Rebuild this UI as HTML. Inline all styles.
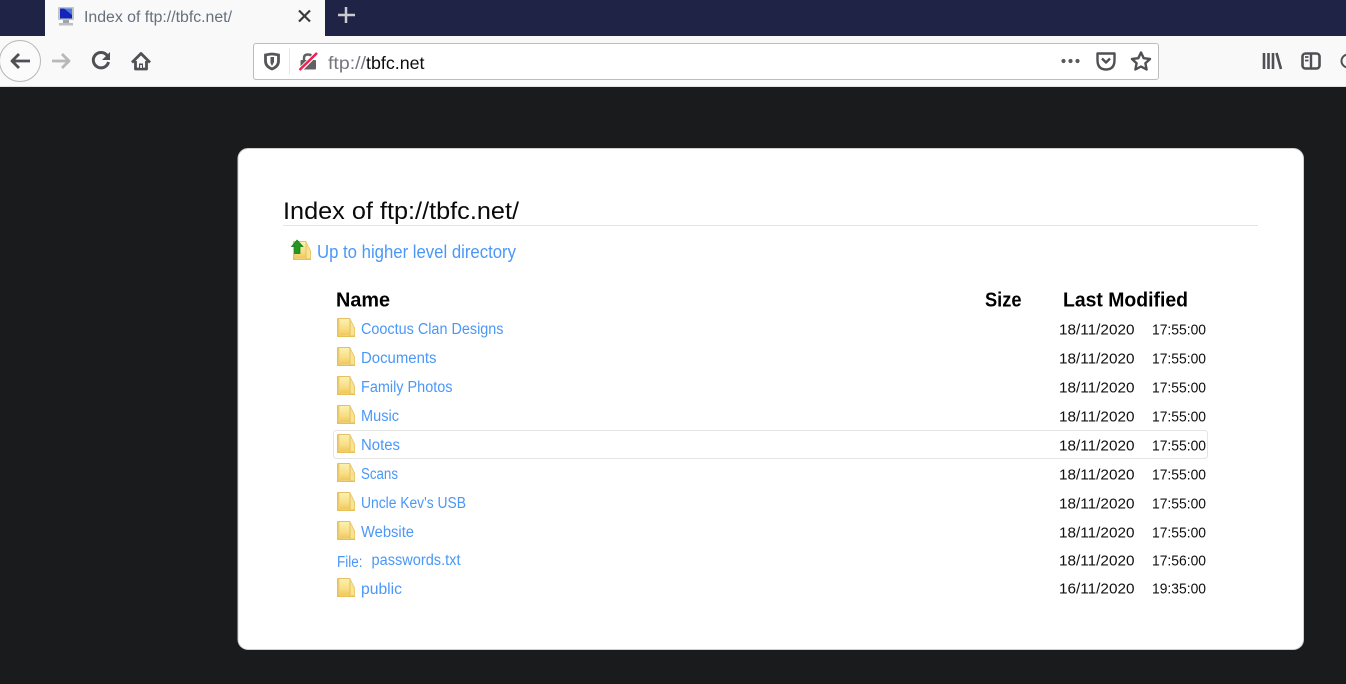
<!DOCTYPE html>
<html lang="en">
<head>
<meta charset="utf-8">
<title>Index of ftp://tbfc.net/</title>
<style>
html,body{margin:0;padding:0;width:1346px;height:684px;overflow:hidden;background:#1a1b1d}
svg{display:block}
text{font-family:"Liberation Sans",Arial,sans-serif}
.l{fill:#4a97f8;font-size:15.5px}
.d{fill:#111;font-size:15px}
.h{fill:#000;font-size:20px;font-weight:bold}
.ic{fill:none;stroke:#505054;stroke-linecap:butt;stroke-linejoin:round}
</style>
</head>
<body>
<svg width="1346" height="684" viewBox="0 0 1346 684" xmlns="http://www.w3.org/2000/svg">
<defs>
<linearGradient id="fg" x1="0" y1="0" x2="0" y2="1"><stop offset="0" stop-color="#fdf0ae"/><stop offset=".6" stop-color="#f8de86"/><stop offset="1" stop-color="#f0c85c"/></linearGradient>
<linearGradient id="fe" x1="0" y1="0" x2="1" y2="0"><stop offset="0" stop-color="#e3bf5c"/><stop offset=".25" stop-color="#f8e08c"/><stop offset="1" stop-color="#fbe89a"/></linearGradient>
<g id="folder">
<path d="M0 2 Q0 1 1 1 H13 L18 11 V19 Q18 20 17 20 H1 Q0 20 0 19Z" fill="#e3c064"/>
<path d="M0.500 2 H12.500 V19.500 H0.500Z" fill="url(#fe)"/>
<path d="M2.500 2 H12.500 V18 H2.500Z" fill="url(#fg)"/>
<path d="M13.500 3.500 L17.300 11.500 V19 H13.500Z" fill="#f9e390"/>
<rect x="0" y="18.500" width="18" height="1.500" fill="#e6bf58"/>
</g>
</defs>

<rect width="1346" height="36" fill="#1f2345"/>
<rect x="45" width="280" height="36" fill="#f9f9fa"/>
<rect x="58" y="7" width="16" height="13" rx="1" fill="#c2c4c8"/>
<rect x="60" y="8.500" width="12" height="10" fill="#1426b8"/>
<path d="M64 8.500 H72 V15Z" fill="#4a78e0"/>
<rect x="63" y="20" width="6" height="3" fill="#a0a2a6"/>
<rect x="59" y="23" width="14" height="2.500" fill="#bcbec2"/>
<text x="84" y="22" font-size="15.500" fill="#66707c" textLength="148" lengthAdjust="spacingAndGlyphs">Index of ftp://tbfc.net/</text>
<path d="M299 10.500 L310 21.500 M310 10.500 L299 21.500" stroke="#3a3a3e" stroke-width="2.200" fill="none"/>
<path d="M346 7 V23 M338 15 H355" stroke="#c9cad2" stroke-width="2.500" fill="none"/>

<rect y="36" width="1346" height="50" fill="#f9f9fa"/>
<rect y="86" width="1346" height="1" fill="#e2e2e4"/>

<circle cx="20" cy="61" r="20.500" fill="#fbfbfb" stroke="#b8b8ba"/>
<path class="ic" d="M30 61 H12 M19 54 L12 61 L19 68" style="stroke-width:2.800"/>
<path class="ic" d="M52 61 H69 M62 54 L69 61 L62 68" style="stroke:#b8b8ba;stroke-width:2.800"/>
<path class="ic" d="M107.500 56 A7.700 7.700 0 1 0 108.500 62" style="stroke-width:3"/>
<path d="M110 52 V60 H102Z" fill="#505054"/>
<path class="ic" d="M132 62.500 L141 53.500 L150 62.500" style="stroke-width:2.800"/>
<path class="ic" d="M135.500 61 V69 H146.500 V61" style="stroke-width:2.800"/>
<path d="M139 69 V63.500 H143 V69Z" fill="#505054"/>
<rect x="140.200" y="65" width="1.700" height="3" fill="#f9f9fa"/>

<rect x="253.500" y="43.500" width="905" height="36" rx="2.500" fill="#fff" stroke="#bdbdc0"/>
<path d="M265.500 55 Q270 54 272 54 Q274 54 278.500 55 V61 Q278.500 66.500 272 69 Q265.500 66.500 265.500 61Z" fill="#fff" stroke="#55555a" stroke-width="2.800"/>
<path d="M270.500 57 H274 V62 L272 66 L270.500 63Z" fill="#55555a"/>
<rect x="289" y="48" width="1" height="26" fill="#e6e6e8"/>
<path d="M304 60.500 V58 Q304 54.500 308 54.500 Q312 54.500 312 58 V60.500" fill="none" stroke="#606064" stroke-width="2.400"/>
<rect x="300.500" y="60" width="15.500" height="9.500" rx="1" fill="#606064"/>
<path d="M299 71 L317 53" stroke="#fff" stroke-width="4.500" fill="none"/>
<path d="M299.500 70 L317 53" stroke="#ee1f4f" stroke-width="2.500" fill="none"/>
<text x="328" y="69" font-size="17.500" fill="#76767e" textLength="38" lengthAdjust="spacingAndGlyphs">ftp://</text>
<text x="366" y="69" font-size="17.500" fill="#0c0c0d" textLength="58.500" lengthAdjust="spacingAndGlyphs">tbfc.net</text>

<circle cx="1063.500" cy="61" r="2.100" fill="#5a5a5e"/><circle cx="1070.500" cy="61" r="2.100" fill="#5a5a5e"/><circle cx="1077.500" cy="61" r="2.100" fill="#5a5a5e"/>
<path class="ic" d="M1097.500 53.500 H1114.500 V60 Q1114.500 69.500 1106 69.500 Q1097.500 69.500 1097.500 60Z M1102 58.500 L1106 62.500 L1110 58.500" style="stroke-width:2.400"/>
<path class="ic" d="M1141 52.500 L1143.700 58.200 L1150 59 L1145.400 63.300 L1146.600 69.500 L1141 66.500 L1135.400 69.500 L1136.600 63.300 L1132 59 L1138.300 58.200Z" style="stroke-width:2.400"/>

<path class="ic" d="M1264 53 V69 M1268.500 53 V69 M1273 53 V69 M1276.500 53 L1281 69" style="stroke-width:2.600"/>
<rect x="1302.500" y="53.500" width="17" height="15" rx="3" class="ic" style="stroke-width:2.600"/>
<path class="ic" d="M1311 53 V69" style="stroke-width:2.400"/>
<path d="M1305 57 H1308.500 M1305 60.500 H1308.500" stroke="#505054" stroke-width="1.700"/>
<path d="M1348 54.500 A6.500 6.500 0 0 0 1348 67.500" class="ic" style="stroke-width:2"/>

<rect x="238" y="148.500" width="1065.500" height="501" rx="10" fill="#fff" stroke="#d0d0d0"/>

<text x="283" y="219" font-size="24.500" fill="#0a0a0a" textLength="236" lengthAdjust="spacingAndGlyphs">Index of ftp://tbfc.net/</text>
<rect x="283" y="225" width="975" height="1" fill="#e3e3e3"/>

<use href="#folder" x="293" y="240"/>
<path d="M297 240 L303 246.500 H300 V253.500 H294.500 V246.500 H291.500Z" fill="#1e9a22" stroke="#137a18" stroke-width=".7"/>
<text x="317" y="258" font-size="18" fill="#4a97f8" textLength="199" lengthAdjust="spacingAndGlyphs">Up to higher level directory</text>

<text class="h" x="336" y="306.500" textLength="54" lengthAdjust="spacingAndGlyphs">Name</text>
<text class="h" x="985" y="306.500" textLength="36.500" lengthAdjust="spacingAndGlyphs">Size</text>
<text class="h" x="1063" y="306.500" textLength="125" lengthAdjust="spacingAndGlyphs">Last Modified</text>

<rect x="333.500" y="430.500" width="874" height="28" rx="3" fill="#fff" stroke="#e4e4e4"/>

<use href="#folder" x="337" y="317"/>
<text class="l" x="361" y="334" textLength="142.500" lengthAdjust="spacingAndGlyphs">Cooctus Clan Designs</text>
<text class="d" x="1059" y="334.500" textLength="75.500" lengthAdjust="spacingAndGlyphs">18/11/2020</text>
<text class="d" x="1152" y="334.500" textLength="54" lengthAdjust="spacingAndGlyphs">17:55:00</text>

<use href="#folder" x="337" y="346"/>
<text class="l" x="361" y="363" textLength="75.500" lengthAdjust="spacingAndGlyphs">Documents</text>
<text class="d" x="1059" y="363.500" textLength="75.500" lengthAdjust="spacingAndGlyphs">18/11/2020</text>
<text class="d" x="1152" y="363.500" textLength="54" lengthAdjust="spacingAndGlyphs">17:55:00</text>

<use href="#folder" x="337" y="375"/>
<text class="l" x="361" y="392" textLength="91.500" lengthAdjust="spacingAndGlyphs">Family Photos</text>
<text class="d" x="1059" y="392.500" textLength="75.500" lengthAdjust="spacingAndGlyphs">18/11/2020</text>
<text class="d" x="1152" y="392.500" textLength="54" lengthAdjust="spacingAndGlyphs">17:55:00</text>

<use href="#folder" x="337" y="404"/>
<text class="l" x="361" y="421" textLength="38" lengthAdjust="spacingAndGlyphs">Music</text>
<text class="d" x="1059" y="421.500" textLength="75.500" lengthAdjust="spacingAndGlyphs">18/11/2020</text>
<text class="d" x="1152" y="421.500" textLength="54" lengthAdjust="spacingAndGlyphs">17:55:00</text>

<use href="#folder" x="337" y="433"/>
<text class="l" x="361" y="450" textLength="39" lengthAdjust="spacingAndGlyphs">Notes</text>
<text class="d" x="1059" y="450.500" textLength="75.500" lengthAdjust="spacingAndGlyphs">18/11/2020</text>
<text class="d" x="1152" y="450.500" textLength="54" lengthAdjust="spacingAndGlyphs">17:55:00</text>

<use href="#folder" x="337" y="462"/>
<text class="l" x="361" y="479" textLength="37" lengthAdjust="spacingAndGlyphs">Scans</text>
<text class="d" x="1059" y="479.500" textLength="75.500" lengthAdjust="spacingAndGlyphs">18/11/2020</text>
<text class="d" x="1152" y="479.500" textLength="54" lengthAdjust="spacingAndGlyphs">17:55:00</text>

<use href="#folder" x="337" y="491"/>
<text class="l" x="361" y="508" textLength="105" lengthAdjust="spacingAndGlyphs">Uncle Kev's USB</text>
<text class="d" x="1059" y="508.500" textLength="75.500" lengthAdjust="spacingAndGlyphs">18/11/2020</text>
<text class="d" x="1152" y="508.500" textLength="54" lengthAdjust="spacingAndGlyphs">17:55:00</text>

<use href="#folder" x="337" y="520"/>
<text class="l" x="361" y="537" textLength="53" lengthAdjust="spacingAndGlyphs">Website</text>
<text class="d" x="1059" y="537.500" textLength="75.500" lengthAdjust="spacingAndGlyphs">18/11/2020</text>
<text class="d" x="1152" y="537.500" textLength="54" lengthAdjust="spacingAndGlyphs">17:55:00</text>

<text class="l" x="337" y="567" textLength="25.500" lengthAdjust="spacingAndGlyphs">File:</text>
<text class="l" x="371.500" y="565" textLength="89" lengthAdjust="spacingAndGlyphs">passwords.txt</text>
<text class="d" x="1059" y="565.500" textLength="75.500" lengthAdjust="spacingAndGlyphs">18/11/2020</text>
<text class="d" x="1152" y="565.500" textLength="54" lengthAdjust="spacingAndGlyphs">17:56:00</text>

<use href="#folder" x="337" y="577"/>
<text class="l" x="361" y="594" textLength="41" lengthAdjust="spacingAndGlyphs">public</text>
<text class="d" x="1059" y="593.500" textLength="75.500" lengthAdjust="spacingAndGlyphs">16/11/2020</text>
<text class="d" x="1152" y="593.500" textLength="54" lengthAdjust="spacingAndGlyphs">19:35:00</text>
</svg>
</body>
</html>
